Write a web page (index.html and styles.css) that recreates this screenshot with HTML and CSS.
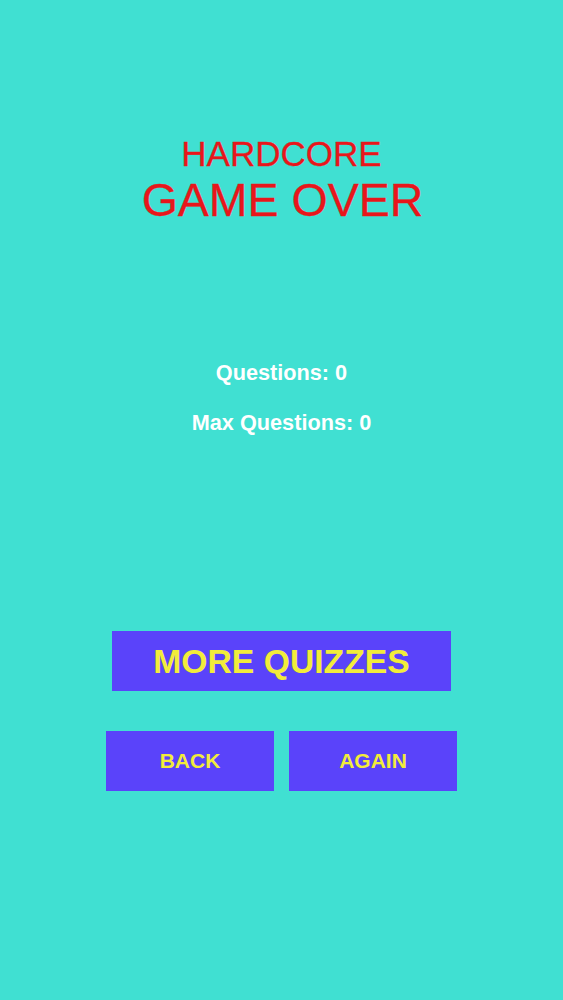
FILE: index.html
```html
<!DOCTYPE html>
<html lang="en">
<head>
  <meta charset="UTF-8">
  <title>Game Over</title>
  <meta name="viewport" content="width=device-width, initial-scale=1.0">
  <link rel="stylesheet" href="styles.css">
</head>
<body>
  <div id="main-content">
    <div class="title">
      <div class="mode">HARDCORE</div>
      <div class="over">GAME OVER</div>
    </div>

    <div class="stats">
      <div>Questions: 0</div>
      <div>Max Questions: 0</div>
    </div>

    <div class="actions">
      <button class="more">MORE QUIZZES</button>
      <div class="row">
        <button class="small">BACK</button>
        <button class="small">AGAIN</button>
      </div>
    </div>
  </div>
</body>
</html>
```

FILE: styles.css
```css
body {
  font-family: "Liberation Sans", Arial, sans-serif;
  text-align: center;
  background: #40e0d2;
  margin: 0;
  padding: 0;
  height: 1000px;
}

#main-content {
  display: flex;
  flex-direction: column;
  align-items: center;
  padding-top: 134px;
}

.title { color: #e8161b; -webkit-text-stroke: 0.3px #e8161b; }
.mode { font-size: 35px; line-height: 40px; }
.over { font-size: 46.5px; line-height: 46px; margin-top: 3px; margin-left: 2px; }

.stats {
  margin-top: 125px;
  color: #ffffff;
  font-weight: bold;
  font-size: 21.7px;
  line-height: 50px;
}

.actions {
  margin-top: 183px;
  display: flex;
  flex-direction: column;
  align-items: center;
  gap: 40px;
}

button {
  font-family: inherit;
  font-weight: bold;
  background: #5a43fa;
  color: #f2ec3a;
  border: none;
  border-radius: 0;
  padding: 0;
  height: 60px;
  cursor: pointer;
  display: flex;
  justify-content: center;
  align-items: center;
}

.more { width: 339px; font-size: 33.7px; }

.row {
  display: flex;
  gap: 15px;
}

.small { width: 168px; font-size: 21px; }
```
